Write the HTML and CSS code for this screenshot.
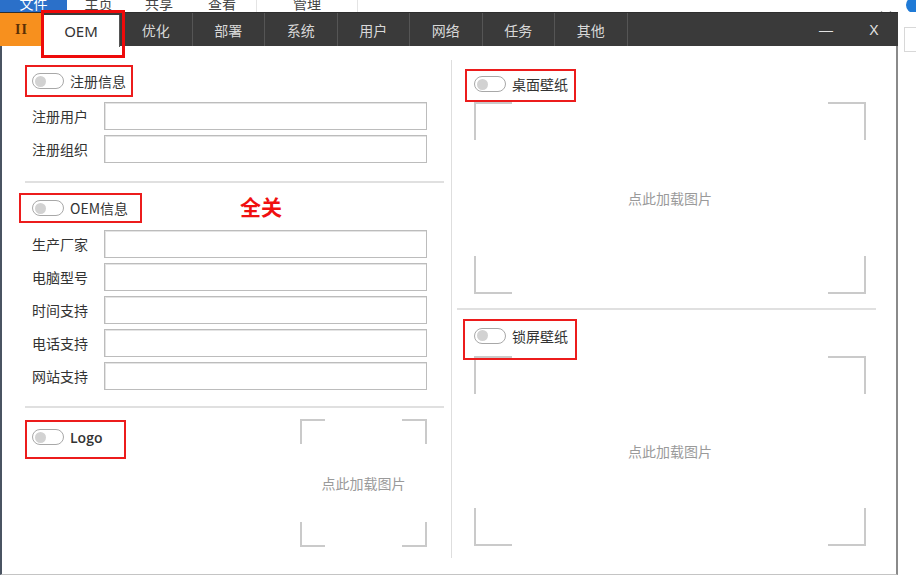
FILE: index.html
```html
<!DOCTYPE html>
<html lang="zh">
<head>
<meta charset="utf-8">
<title>OEM</title>
<link rel="stylesheet" href="styles.css">
</head>
<body>
<div class="ribbon">
  <div class="rb-file"><span>文件</span></div>
  <div class="rb-item rb-w63"><span>主页</span></div>
  <div class="rb-item rb-w58"><span>共享</span></div>
  <div class="rb-item rb-w69 rb-sep"><span>查看</span></div>
  <div class="rb-item rb-w101 rb-sep"><span>管理</span></div>
  <div class="rb-fill"></div>
  <div class="rb-chev">
    <svg width="12" height="8" viewBox="0 0 12 8"><path d="M1 1.5 L6 6 L11 1.5" fill="none" stroke="#8a8a8a" stroke-width="1.4"/></svg>
  </div>
  <div class="rb-help"></div>
</div>
<div class="stage">
  <div class="window">
    <div class="tabbar">
      <div class="tab tab-pause">II</div>
      <div class="tab tab-active">OEM</div>
      <div class="tab">优化</div>
      <div class="tab">部署</div>
      <div class="tab">系统</div>
      <div class="tab">用户</div>
      <div class="tab">网络</div>
      <div class="tab">任务</div>
      <div class="tab">其他</div>
      <div class="tab-spacer"></div>
      <div class="winbtn winbtn-min">—</div>
      <div class="winbtn winbtn-close">X</div>
    </div>
    <div class="content">
      <div class="col-left">
        <div class="toggle-box box-reg">
          <span class="pill"></span><span class="tlabel">注册信息</span>
        </div>
        <div class="rows rows-reg">
          <div class="row"><span class="lbl">注册用户</span><span class="inp"></span></div>
          <div class="row"><span class="lbl">注册组织</span><span class="inp"></span></div>
        </div>
        <div class="hline hline-1"></div>
        <div class="oem-head">
          <div class="toggle-box box-oem">
            <span class="pill"></span><span class="tlabel">OEM信息</span>
          </div>
          <span class="all-off">全关</span>
        </div>
        <div class="rows rows-oem">
          <div class="row"><span class="lbl">生产厂家</span><span class="inp"></span></div>
          <div class="row"><span class="lbl">电脑型号</span><span class="inp"></span></div>
          <div class="row"><span class="lbl">时间支持</span><span class="inp"></span></div>
          <div class="row"><span class="lbl">电话支持</span><span class="inp"></span></div>
          <div class="row"><span class="lbl">网站支持</span><span class="inp"></span></div>
        </div>
        <div class="hline hline-2"></div>
        <div class="logo-sec">
          <div class="toggle-box box-logo">
            <span class="pill"></span><span class="tlabel tlabel-logo">Logo</span>
          </div>
          <div class="frame frame-small"><span>点此加载图片</span></div>
        </div>
      </div>
      <div class="vline"></div>
      <div class="col-right">
        <div class="toggle-box box-desk">
          <span class="pill"></span><span class="tlabel">桌面壁纸</span>
        </div>
        <div class="frame frame-desk"><span>点此加载图片</span></div>
        <div class="hline hline-3"></div>
        <div class="toggle-box box-lock">
          <span class="pill"></span><span class="tlabel">锁屏壁纸</span>
        </div>
        <div class="frame frame-lock"><span>点此加载图片</span></div>
      </div>
    </div>
  </div>
  <div class="side">
    <div class="side-box"></div>
  </div>
</div>
</body>
</html>
```

FILE: styles.css
```css
* { box-sizing: border-box; }

html, body {
  margin: 0;
  padding: 0;
}

body {
  width: 916px;
  height: 575px;
  overflow: hidden;
  background: #ffffff;
  font-family: "Noto Sans CJK SC", "Noto Sans", sans-serif;
  color: #333;
}

/* ---------- background explorer ribbon ---------- */
.ribbon {
  display: flex;
  height: 12px;
  overflow: hidden;
  background: #fff;
  font-size: 14px;
}
.ribbon span {
  display: block;
  line-height: 14px;
  margin-top: -4px;
}
.rb-file {
  width: 67px;
  background: #2b70c9;
  color: #fff;
  text-align: center;
}
.rb-item {
  color: #444;
  text-align: center;
}
.rb-w63 { width: 63px; }
.rb-w58 { width: 58px; }
.rb-w69 { width: 69px; }
.rb-w101 { width: 101px; }
.rb-sep { border-right: 1px solid #e4e4e4; }
.rb-fill { flex: 1; }
.rb-chev {
  width: 26px;
  padding-top: 2px;
  flex: none;
}
.rb-help {
  width: 16px;
  height: 16px;
  flex: none;
  margin-top: -3px;
  margin-right: -6px;
  border-radius: 50%;
  background: #1f7ad6;
}

/* ---------- stage ---------- */
.stage {
  display: flex;
  height: 563px;
}
.window {
  width: 898px;
  display: flex;
  flex-direction: column;
}
.side {
  flex: 1;
  padding-top: 15px;
}
.side-box {
  height: 25px;
  margin-left: 6px;
  border: 1px solid #d8d8d8;
  border-right: none;
}

/* ---------- tab bar ---------- */
.tabbar {
  display: flex;
  height: 34px;
  background: #3a3a3a;
  border-top: 1px solid #2e2e2e;
}
.tab {
  width: 72.5px;
  height: 100%;
  display: flex;
  align-items: center;
  justify-content: center;
  font-size: 14px;
  color: #d8d8d8;
  border-right: 1px solid #555;
}
.tab-pause {
  width: 43px;
  background: #f7901e;
  color: #5b2f05;
  font-family: "Liberation Serif", serif;
  font-weight: bold;
  font-size: 14px;
  letter-spacing: 1px;
  border-right: none;
}
.tab-active {
  position: relative;
  width: 77px;
  margin-top: 2px;
  height: 32px;
  background: #ffffff;
  color: #333;
  font-family: "Noto Sans", "Noto Sans CJK SC", sans-serif;
  font-size: 15px;
  border-right: 1px solid #555;
}
.tab-active::after {
  content: "";
  position: absolute;
  left: -2px;
  right: -6px;
  top: -5px;
  bottom: -11px;
  border: 3px solid #ee0a0a;
  z-index: 5;
}
.tab-spacer { flex: 1; }
.winbtn {
  width: 48px;
  display: flex;
  align-items: center;
  justify-content: center;
  color: #e2e2e2;
  font-size: 14px;
  font-family: "Liberation Sans", sans-serif;
}

/* ---------- content ---------- */
.content {
  flex: 1;
  display: flex;
  background: #fff;
  border-left: 2px solid #4a5462;
  border-right: 2px solid #8a8a8a;
  border-bottom: 1px solid #c4c4c4;
}

.col-left {
  width: 420px;
  margin-left: 23px;
  padding-top: 19px;
  display: flex;
  flex-direction: column;
}
.vline {
  width: 1px;
  margin-left: 6px;
  margin-top: 14px;
  margin-bottom: 16px;
  background: #dedede;
}
.col-right {
  width: 419px;
  margin-left: 5px;
  padding-top: 23px;
  display: flex;
  flex-direction: column;
}

/* toggle with red annotation box */
.toggle-box {
  display: flex;
  align-items: center;
  border: 2px solid #ec1c1c;
  font-size: 14px;
  color: #333;
}
.pill {
  width: 32px;
  height: 16px;
  border: 1.5px solid #a8a8a8;
  border-radius: 8px;
  background: #fff;
  flex: none;
  display: flex;
  align-items: center;
  padding-left: 2px;
}
.pill::before {
  content: "";
  width: 11px;
  height: 11px;
  border-radius: 50%;
  background: #d2d2d2;
}
.tlabel { margin-left: 6px; white-space: nowrap; }
.tlabel-logo {
  font-family: "Open Sans", "Noto Sans", sans-serif;
  font-weight: 600;
  font-size: 14px;
}

.box-reg {
  width: 108px;
  height: 32px;
  padding-left: 5px;
}
.box-oem {
  width: 123px;
  height: 30px;
  margin-left: -6px;
  padding-left: 11px;
}
.box-logo {
  width: 101px;
  height: 39px;
  margin-top: 1px;
  padding-left: 5px;
  padding-bottom: 5px;
}
.box-desk {
  width: 111px;
  height: 33px;
  margin-left: 8px;
  padding-left: 7px;
  padding-bottom: 3px;
}
.box-lock {
  width: 114px;
  height: 41px;
  margin-left: 6px;
  margin-top: 9px;
  padding-left: 9px;
  padding-bottom: 8px;
  position: relative;
  z-index: 2;
}

.oem-head {
  display: flex;
  align-items: center;
  margin-top: 10px;
}
.all-off {
  margin-left: 98px;
  margin-top: -4px;
  color: #f01010;
  font-weight: bold;
  font-size: 21px;
  line-height: 24px;
}

/* form rows */
.rows {
  display: flex;
  flex-direction: column;
  gap: 5px;
}
.rows-reg { margin-top: 5px; }
.rows-oem { margin-top: 7px; }
.row {
  display: flex;
  align-items: center;
  height: 28px;
}
.lbl {
  width: 79px;
  padding-left: 7px;
  font-size: 14px;
  color: #333;
}
.inp {
  width: 323px;
  height: 28px;
  border: 1px solid #bcbcbc;
  box-shadow: inset 1px 1px 0 #e4e4e4;
  background: #fff;
}

.hline {
  height: 2px;
  background: #e0e0e0;
}
.hline-1 { margin-top: 18px; width: 419px; }
.hline-2 { margin-top: 16px; width: 419px; }
.hline-3 { margin-top: 14px; width: 419px; }

.logo-sec {
  display: flex;
  justify-content: space-between;
  align-items: flex-start;
  margin-top: 11px;
  padding-right: 18px;
}

/* image placeholder frames drawn with corner brackets */
.frame {
  display: flex;
  align-items: center;
  justify-content: center;
  font-size: 14px;
  color: #9a9a9a;
  --c: #cacaca;
  --a: 38px;
  background:
    linear-gradient(var(--c), var(--c)) left top / var(--a) 2px no-repeat,
    linear-gradient(var(--c), var(--c)) left top / 2px var(--a) no-repeat,
    linear-gradient(var(--c), var(--c)) right top / var(--a) 2px no-repeat,
    linear-gradient(var(--c), var(--c)) right top / 2px var(--a) no-repeat,
    linear-gradient(var(--c), var(--c)) left bottom / var(--a) 2px no-repeat,
    linear-gradient(var(--c), var(--c)) left bottom / 2px var(--a) no-repeat,
    linear-gradient(var(--c), var(--c)) right bottom / var(--a) 2px no-repeat,
    linear-gradient(var(--c), var(--c)) right bottom / 2px var(--a) no-repeat;
}
.frame-small {
  --a: 25px;
  width: 127px;
  height: 128px;
}
.frame-desk {
  width: 392px;
  height: 192px;
  margin-left: 17px;
}
.frame-lock {
  width: 392px;
  height: 190px;
  margin-left: 17px;
  margin-top: -4px;
}
```
